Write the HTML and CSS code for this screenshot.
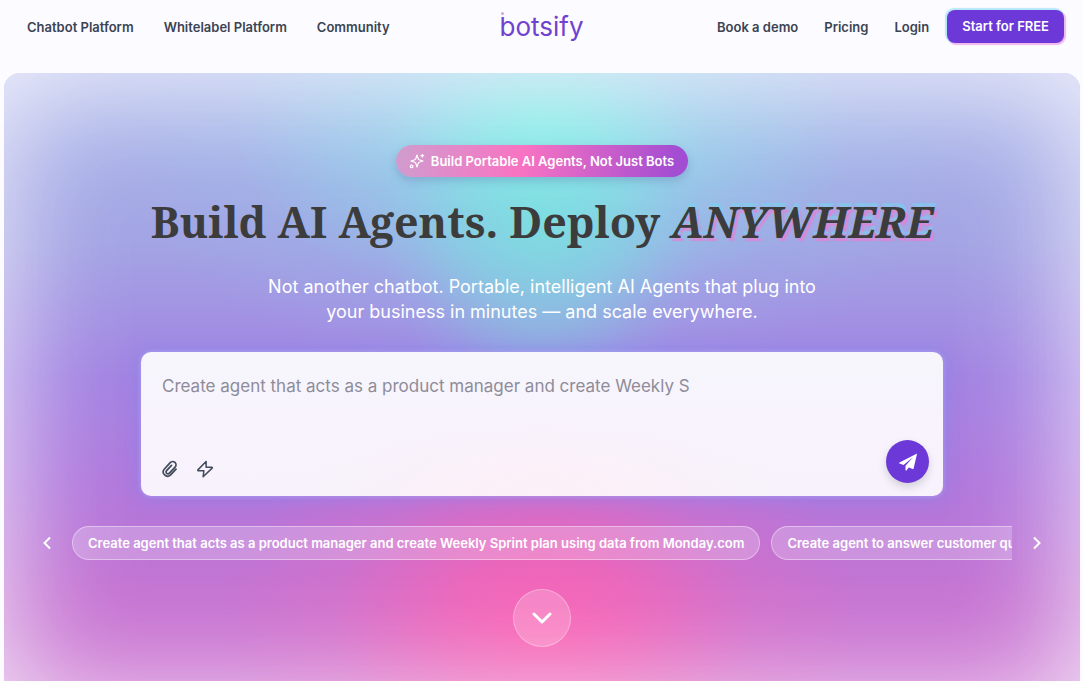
FILE: index.html
```html
<!DOCTYPE html>
<html lang="en">
<head>
    <meta charset="UTF-8">
    <meta name="viewport" content="width=device-width, initial-scale=1.0">
    <title>Botsify - Build AI Agents</title>
    <link rel="stylesheet" href="styles.css">
</head>
<body>
    <header class="navbar">
        <nav class="nav-links" aria-label="Main">
            <a href="#">Chatbot Platform</a>
            <a href="#">Whitelabel Platform</a>
            <a href="#">Community</a>
        </nav>
        <a href="#" class="logo">botsify</a>
        <nav class="nav-links nav-right" aria-label="Account">
            <a href="#">Book a demo</a>
            <a href="#">Pricing</a>
            <a href="#">Login</a>
            <a href="#" class="cta">Start for FREE</a>
        </nav>
    </header>

    <main class="hero">
        <div class="badge">
            <svg width="16" height="16" viewBox="0 0 24 24" fill="none" stroke="currentColor" stroke-width="1.8" stroke-linecap="round" stroke-linejoin="round" aria-hidden="true">
                <path d="M12 3l-1.9 5.8a2 2 0 0 1-1.3 1.3L3 12l5.8 1.9a2 2 0 0 1 1.3 1.3L12 21l1.9-5.8a2 2 0 0 1 1.3-1.3L21 12l-5.8-1.9a2 2 0 0 1-1.3-1.3z"/>
                <path d="M20 2v4M22 4h-4"/>
                <circle cx="4" cy="20" r="2"/>
            </svg>
            <span>Build Portable AI Agents, Not Just Bots</span>
        </div>

        <h1>Build AI Agents. Deploy <em>ANYWHERE</em></h1>
        <p class="subtitle">Not another chatbot. Portable, intelligent AI Agents that plug into<br>your business in minutes — and scale everywhere.</p>

        <form class="prompt-box">
            <textarea aria-label="Describe your agent" placeholder="Create agent that acts as a product manager and create Weekly S"></textarea>
            <div class="prompt-actions">
                <button type="button" class="icon-button" aria-label="Attach file">
                    <svg width="16" height="18" viewBox="0 0 16 18" fill="none" stroke="currentColor" stroke-width="1.7" stroke-linecap="round" stroke-linejoin="round">
                        <path d="M14 9.2l-5.6 5.9a4.3 4.3 0 0 1-6.2-5.9l6-6.6a3.3 3.3 0 0 1 4.9 4.5l-5.7 6.1a1.9 1.9 0 0 1-2.8-2.6l4.9-5.2"/>
                    </svg>
                </button>
                <button type="button" class="icon-button" aria-label="Quick actions">
                    <svg width="18" height="18" viewBox="0 0 24 24" fill="none" stroke="currentColor" stroke-width="2" stroke-linecap="round" stroke-linejoin="round">
                        <path d="M13.5 2L2.5 13.2c-.4.5-.2 1.2.5 1.2h7.5L9.5 22.3 21.5 10.8c.5-.5.3-1.2-.5-1.2h-7.5z"/>
                    </svg>
                </button>
                <button type="submit" class="send-button" aria-label="Send">
                    <svg width="18" height="18" viewBox="0 0 18 18" fill="currentColor">
                        <path d="M17.6.7L.5 9.4c-.5.3-.5 1 .1 1.2l3.9 1.4L14 4.2 6.5 12.8V17c0 .6.7.8 1 .4l2.2-2.8 4 1.5c.4.1.8-.1.9-.5L18 1.1c0-.4-.2-.5-.4-.4z"/>
                    </svg>
                </button>
            </div>
        </form>

        <div class="suggestions">
            <button type="button" class="arrow" aria-label="Previous">
                <svg width="12" height="14" viewBox="0 0 12 14" fill="none" stroke="currentColor" stroke-width="2"><path d="M10 1.5L4.5 7l5.5 5.5"/></svg>
            </button>
            <div class="chips">
                <button type="button" class="chip">Create agent that acts as a product manager and create Weekly Sprint plan using data from Monday.com</button>
                <button type="button" class="chip">Create agent to answer customer questions</button>
            </div>
            <button type="button" class="arrow" aria-label="Next">
                <svg width="12" height="14" viewBox="0 0 12 14" fill="none" stroke="currentColor" stroke-width="2"><path d="M2 1.5L7.5 7 2 12.5"/></svg>
            </button>
        </div>

        <a href="#" class="scroll-down" aria-label="Scroll down">
            <svg width="20" height="14" viewBox="0 0 20 14" fill="none" stroke="currentColor" stroke-width="3" stroke-linecap="round" stroke-linejoin="round"><path d="M2 3l8 8 8-8"/></svg>
        </a>
    </main>
</body>
</html>
```
FILE: styles.css
```css
:root {
    --primary: #6c38d8;
    --text-dark: #3b4453;
    --heading: #3c3c3c;
    --page: #fcfbff;
}

* {
    box-sizing: border-box;
}

body {
    margin: 0;
    min-height: 100vh;
    display: flex;
    flex-direction: column;
    background-color: var(--page);
    font-family: Inter, "Open Sans", sans-serif;
    color: var(--text-dark);
}

button {
    font-family: inherit;
    border: none;
    background: none;
    padding: 0;
    cursor: pointer;
}

svg {
    display: block;
}

a {
    color: inherit;
    text-decoration: none;
}

/* Navigation */
.navbar {
    display: grid;
    grid-template-columns: 1fr auto 1fr;
    align-items: center;
    height: 53px;
    padding: 0 19px;
    margin-bottom: 20px;
}

.nav-links {
    display: flex;
    align-items: center;
    gap: 30px;
    padding-left: 8px;
    font-size: 13px;
    font-weight: 600;
}

.nav-right {
    justify-content: flex-end;
    gap: 26px;
    padding-left: 0;
}

.logo {
    position: relative;
    color: #7042cf;
    font-size: 26px;
    line-height: 32px;
}

/* antenna dot over the "b" */
.logo::before {
    content: "";
    position: absolute;
    top: 1px;
    left: 2px;
    width: 3px;
    height: 3px;
    border-radius: 50%;
    background-color: #dc9fe6;
}

.cta {
    margin-left: -8px;
    padding: 0 15px;
    line-height: 33px;
    border-radius: 8px;
    background-color: var(--primary);
    color: #fff;
    box-shadow: -1px -1px 1px 1px #b5e8fb, 1px 1px 1px 1px #f3b5ee;
}

/* Hero */
.hero {
    flex: 1;
    display: flex;
    flex-direction: column;
    align-items: center;
    margin: 0 3px 0 4px;
    padding: 72px 36px 35px;
    border-radius: 16px 16px 0 0;
    background:
        radial-gradient(ellipse 15% 34% at 50% 24%, rgba(114, 234, 222, 0.65), rgba(114, 234, 222, 0.4) 45%, rgba(114, 234, 222, 0.1) 80%, rgba(114, 234, 222, 0)),
        radial-gradient(ellipse 40% 44% at 50% 8%, rgba(130, 245, 236, 0.9), rgba(132, 225, 235, 0.5) 38%, rgba(140, 200, 235, 0.15) 72%, rgba(140, 200, 235, 0)),
        radial-gradient(ellipse 30% 42% at 50% 92%, #fb62b4, rgba(248, 98, 180, 0.75) 30%, rgba(235, 105, 190, 0.3) 65%, rgba(220, 110, 200, 0)),
        linear-gradient(#a5b4e8, #a3a4e4 28%, #a283e2 50%, #b178dc 68%, #c473d2 85%, #cd72d0);
    box-shadow: inset 0 18px 120px rgba(246, 242, 252, 0.95);
}

.badge {
    display: flex;
    align-items: center;
    gap: 6px;
    height: 32px;
    padding: 0 14px 0 13px;
    border-radius: 16px;
    background: linear-gradient(100deg, #cf9dce, #f873c2 43%, #a34dd2 95%);
    box-shadow: 0 4px 8px rgba(70, 80, 150, 0.25);
    color: #fff;
    font-size: 13px;
    font-weight: 600;
}

h1 {
    margin: 12px 0 20px;
    font-family: "Noto Serif", "Liberation Serif", serif;
    font-size: 43px;
    line-height: 65px;
    font-weight: 700;
    color: var(--heading);
    text-align: center;
}

h1 em {
    text-shadow: 1px -4px 1px rgba(120, 210, 240, 0.6), 3px 3px 1px rgba(235, 125, 210, 0.7);
}

.subtitle {
    margin: 0 0 28px;
    color: #fff;
    font-size: 18px;
    line-height: 25px;
    text-align: center;
}

.prompt-box {
    display: flex;
    flex-direction: column;
    width: 100%;
    max-width: 802px;
    min-height: 144px;
    padding: 22px 14px 13px 21px;
    border-radius: 10px;
    background: radial-gradient(ellipse 30% 60% at 50% 100%, #fdf0f8, rgba(253, 240, 248, 0)), linear-gradient(#f6f6fc, #f8f3fd 50%, #f7f2fb);
    box-shadow: 0 0 5px rgba(178, 166, 238, 0.9), 0 0 20px rgba(130, 130, 240, 0.65);
}

textarea {
    width: 100%;
    height: 66px;
    padding: 0;
    border: none;
    outline: none;
    resize: none;
    background: transparent;
    color: var(--text-dark);
    font-family: inherit;
    font-size: 17px;
    line-height: 25px;
}

textarea::placeholder {
    color: #8e8c99;
    opacity: 1;
}

.prompt-actions {
    display: flex;
    align-items: center;
    gap: 18px;
}

.icon-button {
    padding-top: 15px;
    color: #414b5b;
}

.send-button {
    display: grid;
    place-items: center;
    width: 43px;
    height: 43px;
    margin-left: auto;
    border-radius: 50%;
    background-color: var(--primary);
    color: #fff;
    box-shadow: 0 4px 8px rgba(0, 0, 0, 0.15);
}

/* Suggestions */
.suggestions {
    display: flex;
    align-items: center;
    gap: 20px;
    width: 100%;
    margin: 30px 0 29px;
}

.arrow {
    flex: none;
    width: 12px;
    color: #fff;
}

.chips {
    flex: 1;
    min-width: 0;
    display: flex;
    gap: 11px;
    overflow: hidden;
}

.chip {
    flex: none;
    height: 34px;
    padding: 0 15px;
    border: 1px solid rgba(255, 255, 255, 0.4);
    border-radius: 17px;
    background-color: rgba(255, 255, 255, 0.22);
    color: #fff;
    font-size: 13px;
    font-weight: 600;
    white-space: nowrap;
}

.scroll-down {
    display: grid;
    place-items: center;
    width: 58px;
    height: 58px;
    border: 1px solid rgba(255, 255, 255, 0.3);
    border-radius: 50%;
    background-color: rgba(255, 255, 255, 0.2);
    color: #fff;
}
```
